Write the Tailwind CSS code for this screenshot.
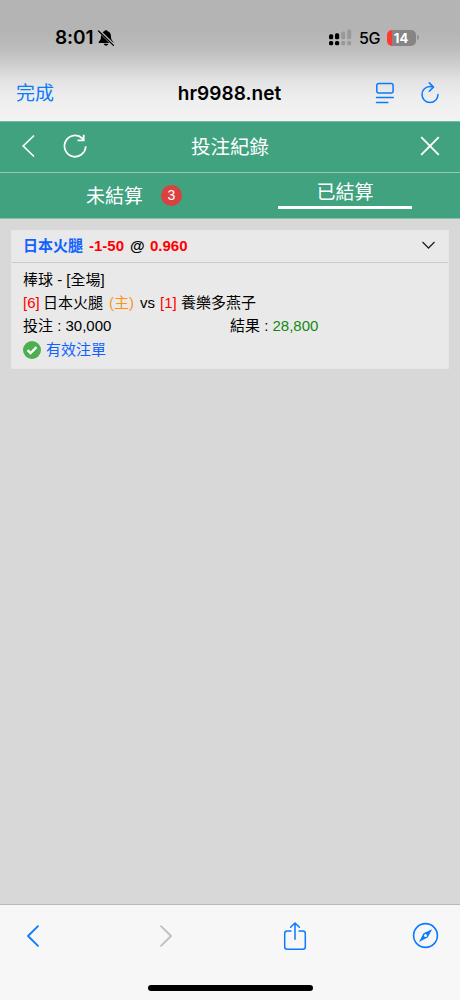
<!DOCTYPE html>
<html lang="zh-Hant">
<head>
<meta charset="utf-8">
<title>投注紀錄</title>
<script src="https://cdn.jsdelivr.net/npm/@tailwindcss/browser@4"></script>
</head>
<body class="w-[460px] h-[1000px] overflow-hidden flex flex-col bg-[#d8d8d8] font-['Liberation_Sans','Noto_Sans_CJK_TC',sans-serif] text-black">

<header class="h-[121px] shrink-0 flex flex-col bg-[linear-gradient(to_bottom,#b4b4b4_0px,#b4b4b4_30px,#bcbcbc_48px,#cfcfcf_65px,#e2e2e2_80px,#eeeeee_98px,#f3f3f3_121px)] font-['Inter','Noto_Sans_CJK_TC',sans-serif]">
  <div class="h-[65px] pt-[10px] pl-[55px] pr-[41px] flex items-center justify-between">
    <div class="flex items-center">
      <span class="w-[42px] text-[19px] font-semibold leading-6 whitespace-nowrap tracking-[-0.1px]">8:01</span>
      <svg class="w-[18px] h-[18px]" viewBox="0 0 18 18">
        <path d="M9 1.2c-.9 0-1.5.5-1.7 1.1C5 3 4 5 4 7.400c0 3.200-1 4-2.200 5.300-.5.6-.2 1.300.6 1.300h13.200c.8 0 1.100-.7.600-1.300C15 11.400 14 10.600 14 7.400c0-2.400-1-4.400-3.300-5.100C10.500 1.700 9.900 1.200 9 1.200zM6.700 14.800c.2 1.100 1.100 1.900 2.300 1.900s2.100-.8 2.300-1.900z" fill="#000"/>
        <path d="M1.700 1.500L17 16.300" stroke="#b8b8b8" stroke-width="3"/>
        <path d="M1.500 2L16.500 16.400" stroke="#000" stroke-width="1.300" stroke-linecap="round"/>
      </svg>
    </div>
    <div class="flex items-center">
      <svg class="w-[23px] h-[17px] mr-[7px]" viewBox="0 0 23 17">
        <g fill="#000"><rect x="0" y="5.300" width="4.200" height="5" rx="1.500"/><rect x="0" y="12" width="4.200" height="4.300" rx="1.500"/><rect x="6" y="4.300" width="4.200" height="6" rx="1.500"/><rect x="6" y="12" width="4.200" height="4.300" rx="1.500"/></g>
        <g fill="#999"><rect x="12.200" y="2.500" width="4" height="7.800" rx="1.500"/><rect x="12.200" y="12" width="4" height="4.300" rx="1.500"/><rect x="18.200" y=".5" width="4" height="9.800" rx="1.500"/><rect x="18.200" y="12" width="4" height="4.300" rx="1.500"/></g>
      </svg>
      <span class="w-[28px] text-[16px] font-medium leading-5 tracking-[-0.4px]">5G</span>
      <div class="w-[29px] h-[16px] rounded-[5px] bg-[linear-gradient(to_right,#ff3b30_4.500px,#858585_4.500px)] text-white text-[13px] font-bold leading-[16px] text-center pr-[1px]">14</div>
      <div class="w-[2px] h-[5px] ml-[1px] rounded-r-full bg-[#929292]"></div>
    </div>
  </div>
  <div class="h-[56px] pt-[1px] pl-[16px] pr-[20px] grid grid-cols-[100px_1fr_100px] items-center">
    <span class="text-[19px] leading-6 pt-[1px] text-[#0a7aff]">完成</span>
    <span class="text-[19px] leading-6 font-semibold text-center ml-[3px] tracking-[0.040px]">hr9988.net</span>
    <div class="flex justify-end items-center gap-[25px] -mt-[1px]">
      <svg class="w-[20px] h-[24px]" viewBox="0 0 20 24" fill="none" stroke="#0a7aff" stroke-width="1.500" stroke-linecap="round"><rect x="1.800" y="2.500" width="16.300" height="9.400" rx="2"/><path d="M1.500 16.500h16.800M1.500 21.500h11.300"/></svg>
      <svg class="w-[20px] h-[24px]" viewBox="0 0 20 24" fill="none" stroke="#0a7aff" stroke-width="1.500" stroke-linecap="round" stroke-linejoin="round"><path d="M18 13.500A8 8 0 1 1 10 5.500c1.200 0 2.300.1 3.300.7M9.300 1.900l4.200 4.200-4.200 4.200"/></svg>
    </div>
  </div>
</header>

<section class="h-[98px] shrink-0 bg-[#40a27f] border-t border-b border-t-[#75b99f] border-b-[#8dbfac] text-white flex flex-col">
  <div class="h-[51px] pb-[2px] border-b border-[#9bc8b7] grid grid-cols-[100px_1fr_100px] items-center">
    <div class="flex items-center pl-[21px] gap-[27px]">
      <svg class="w-[14px] h-[24px]" viewBox="0 0 14 24" fill="none" stroke="#fff" stroke-width="1.700"><path d="M13 1.500L2.200 12 13 22.500"/></svg>
      <svg class="w-[26px] h-[26px] shrink-0" viewBox="0 0 26 26" fill="none" stroke="#fff" stroke-width="1.800"><path d="M23.700 13.300A10.600 10.600 0 1 1 20.300 5.300L22 7M21.700 1.700V7.300H15.500"/></svg>
    </div>
    <h1 class="text-[19.500px] leading-6 text-center font-['Noto_Sans_CJK_TC',sans-serif] font-normal">投注紀錄</h1>
    <svg class="w-[20px] h-[20px] ml-[60px]" viewBox="0 0 20 20" stroke="#fff" stroke-width="1.900"><path d="M1.200 1.200l17.600 17.600M18.800 1.200l-17.600 17.600"/></svg>
  </div>
  <div class="h-[45px] flex text-[19px] leading-6 font-['Noto_Sans_CJK_TC',sans-serif]">
    <div class="w-[230px] pl-[86px] flex items-center gap-[17px]">
      <span class="-mt-[2px]">未結算</span>
      <span class="w-[21px] h-[21px] ml-[1px] rounded-full bg-[#d9423e] text-[14px] leading-[21px] text-center font-['Liberation_Sans',sans-serif]">3</span>
    </div>
    <div class="w-[230px] flex flex-col items-center">
      <span class="mt-[6px] h-[26px] leading-[24px]">已結算</span>
      <span class="w-[134px] h-[3px] mt-[1px] bg-white"></span>
    </div>
  </div>
</section>

<main class="flex-1 pt-[11px] px-[11px]">
  <article class="h-[139px] bg-[#e9e9e9] border border-[#e6e6e6] text-[15px]">
    <div class="h-[32px] pb-[2px] pl-[11px] pr-[12px] border-b border-[#cccccc] flex items-center justify-between font-bold">
      <div class="flex whitespace-nowrap leading-5"><span class="w-[66px] text-[#0f62fe]">日本火腿</span><span class="w-[41px] text-[#ff0000]">-1-50</span><span class="w-[20px]">@</span><span class="text-[#ff0000]">0.960</span></div>
      <svg class="w-[15px] h-[10px] -mt-[2px]" viewBox="0 0 15 10" fill="none" stroke="#222" stroke-width="1.300"><path d="M1.500 2l6 6 6-6"/></svg>
    </div>
    <div class="pl-[11px] pt-[5px] leading-[23px] whitespace-nowrap">
      <div>棒球 - [全場]</div>
      <div class="flex"><span class="w-[20px] text-[#ff0000]">[6]</span><span class="w-[66px]">日本火腿</span><span class="w-[31px] text-[#ff9318]">(主)</span><span class="w-[20px]">vs</span><span class="w-[21px] text-[#ff0000]">[1]</span><span>養樂多燕子</span></div>
      <div class="grid grid-cols-[207px_1fr]"><span>投注 : 30,000</span><span>結果 : <span class="text-[#118a11]">28,800</span></span></div>
      <div class="flex items-center h-[25px] text-[#0f62fe]">
        <svg class="w-[18px] h-[18px] mr-[5px]" viewBox="0 0 18 18"><circle cx="9" cy="9" r="9" fill="#4caf50"/><path d="M4.600 9.100l3 3 5.900-6" fill="none" stroke="#fff" stroke-width="2.300"/></svg>有效注單
      </div>
    </div>
  </article>
</main>

<footer class="h-[96px] shrink-0 border-t border-[#b9b9b9] bg-[#f7f7f7] flex flex-col items-center">
  <div class="w-full h-[62px] pl-[26px] flex items-center">
    <svg class="w-[14px] h-[24px]" viewBox="0 0 14 24" fill="none" stroke="#0a7aff" stroke-width="1.800" stroke-linecap="round" stroke-linejoin="round"><path d="M12 2.200L2 12l10 9.800"/></svg>
    <svg class="w-[14px] h-[24px] ml-[119px]" viewBox="0 0 14 24" fill="none" stroke="#bfbfbf" stroke-width="1.800" stroke-linecap="round" stroke-linejoin="round"><path d="M2 2.200L12 12 2 21.800"/></svg>
    <svg class="w-[24px] h-[30px] ml-[110px] -mt-[1px]" viewBox="0 0 24 30" fill="none" stroke="#0a7aff" stroke-width="1.500" stroke-linecap="round" stroke-linejoin="round"><path d="M8 10H4.200Q1.700 10 1.700 12.500V25.700Q1.700 28.200 4.200 28.200H19.800Q22.300 28.200 22.300 25.700V12.500Q22.300 10 19.800 10H16M12 18.300V2.300M7.600 6.300L12 2l4.400 4.300"/></svg>
    <svg class="w-[27px] h-[27px] ml-[105px] -mt-[1px]" viewBox="0 0 27 27"><circle cx="13.500" cy="13.500" r="11.900" fill="none" stroke="#0a7aff" stroke-width="1.600"/><path d="M20.200 7.200L15.600 15.500 7 20l4.500-8.700z" fill="#0a7aff"/><circle cx="13.500" cy="13.500" r="1.500" fill="#f7f7f7"/></svg>
  </div>
  <div class="w-[165px] h-[6px] mt-[18px] rounded-full bg-black"></div>
</footer>
</body>
</html>
